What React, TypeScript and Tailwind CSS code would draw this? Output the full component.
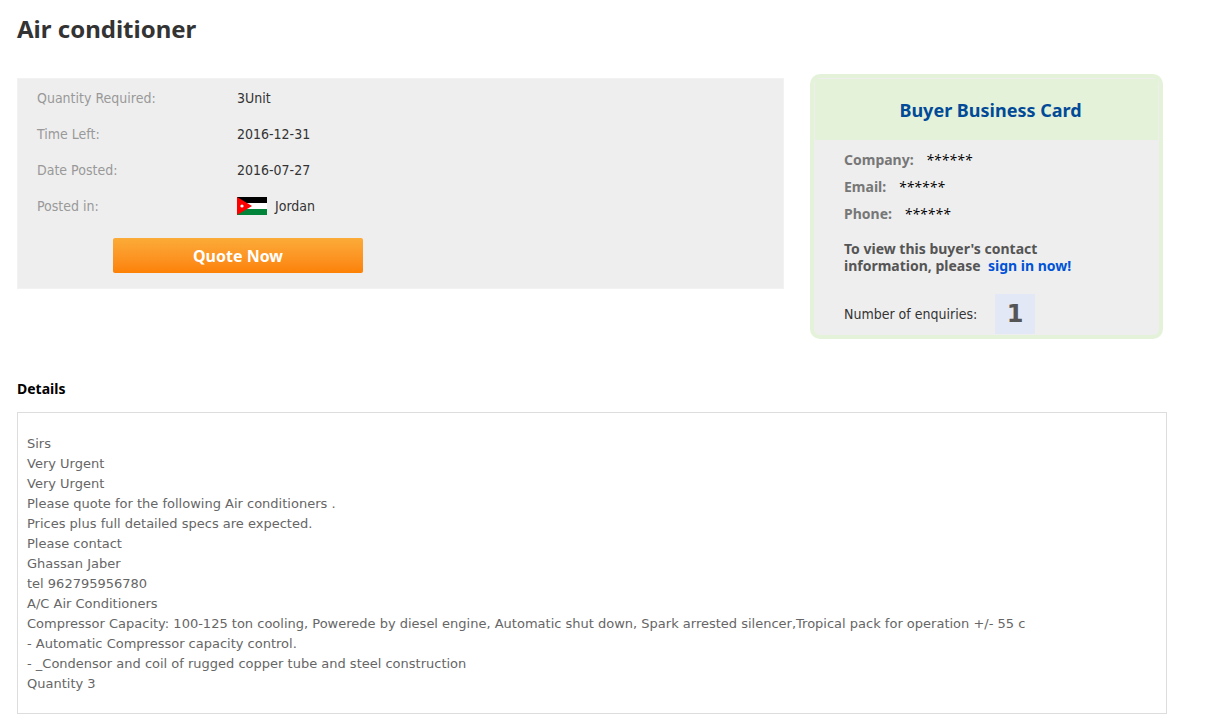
import React from "react";

const contacts = [
  { label: "Company:", value: "******" },
  { label: "Email:", value: "******" },
  { label: "Phone:", value: "******" },
];

const details = [
  "Sirs",
  "Very Urgent",
  "Very Urgent",
  "Please quote for the following Air conditioners .",
  "Prices plus full detailed specs are expected.",
  "Please contact",
  "Ghassan Jaber",
  "tel 962795956780",
  "A/C Air Conditioners",
  "Compressor Capacity: 100-125 ton cooling, Powerede by diesel engine, Automatic shut down, Spark arrested silencer,Tropical pack for operation +/- 55 c",
  "- Automatic Compressor capacity control.",
  "- _Condensor and coil of rugged copper tube and steel construction",
  "Quantity 3",
];

const JordanFlag = () => (
  <svg width="30" height="18" viewBox="0 0 30 18" aria-hidden="true">
    <rect width="30" height="6" fill="#000" />
    <rect y="6" width="30" height="6" fill="#fff" />
    <rect y="12" width="30" height="6" fill="#00843a" />
    <path d="M0 0L15 9L0 18Z" fill="#f00" />
    <circle cx="5" cy="9" r="1.6" fill="#fff" />
  </svg>
);

const Row = ({ label, children }: { label: string; children: React.ReactNode }) => (
  <div className="flex h-9 items-center">
    <dt className="w-[200px] text-[#999]">{label}</dt>
    <dd className="flex items-center gap-2 text-[#333]">{children}</dd>
  </div>
);

const RequestSummary = () => (
  <section className="mt-1 min-w-0 flex-1 border border-[#f2f2f2] bg-[#eee] px-[19px] pt-px pb-[15px]">
    <dl className="font-['DejaVu_Sans_Condensed','DejaVu_Sans',sans-serif]">
      <Row label="Quantity Required:">3Unit</Row>
      <Row label="Time Left:">2016-12-31</Row>
      <Row label="Date Posted:">2016-07-27</Row>
      <Row label="Posted in:">
        <JordanFlag />
        Jordan
      </Row>
    </dl>
    <button
      type="button"
      className="mt-[14px] ml-[76px] block h-[35px] w-[250px] rounded-xs bg-linear-to-b from-[#fbab38] to-[#fc8104] text-base font-bold text-white"
    >
      Quote Now
    </button>
  </section>
);

const BuyerCard = () => (
  <aside className="w-[353px] shrink-0 rounded-[10px] border-4 border-[#e5f2da] bg-[#eee]">
    <h2 className="mx-px mt-px flex h-[61px] items-center justify-center bg-[#e5f2da] pl-2 text-lg font-bold text-[#014a97]">
      Buyer Business Card
    </h2>
    <div className="px-[30px] pt-[6px] pb-px">
      {contacts.map((item) => (
        <p key={item.label} className="flex h-[27px] items-center gap-3 font-bold text-[#777]">
          {item.label}
          <em className="font-normal text-black">{item.value}</em>
        </p>
      ))}
      <p className="mt-[13px] leading-[17px] font-bold text-[#555]">
        To view this buyer's contact
        <br />
        information, please&nbsp;{" "}
        <a href="#" className="text-[#0053d6]">
          sign in now!
        </a>
      </p>
      <p className="mt-5 flex items-center gap-[18px] font-['DejaVu_Sans_Condensed','DejaVu_Sans',sans-serif] text-[#333]">
        Number of enquiries:
        <strong className="flex size-10 items-center justify-center bg-[#e2e8f5] font-['DejaVu_Sans',sans-serif] text-2xl text-[#555]">
          1
        </strong>
      </p>
    </div>
  </aside>
);

const App = () => {
  return (
    <main className="bg-white pt-[9px] pr-11 pb-3 pl-[17px] font-['Noto_Sans',sans-serif] text-sm">
      <h1 className="text-2xl leading-10 font-bold text-[#333]">Air conditioner</h1>
      <div className="mt-[25px] flex items-start gap-[26px] pr-1">
        <RequestSummary />
        <BuyerCard />
      </div>
      <h2 className="mt-10 leading-5 font-bold text-black">Details</h2>
      <div className="mt-[13px] border border-[#ddd] px-[9px] pt-[21px] pb-[19px] font-['DejaVu_Sans',sans-serif] text-[13px] leading-5 text-[#666]">
        {details.map((line, i) => (
          <p key={i}>{line}</p>
        ))}
      </div>
    </main>
  );
};

export default App;
